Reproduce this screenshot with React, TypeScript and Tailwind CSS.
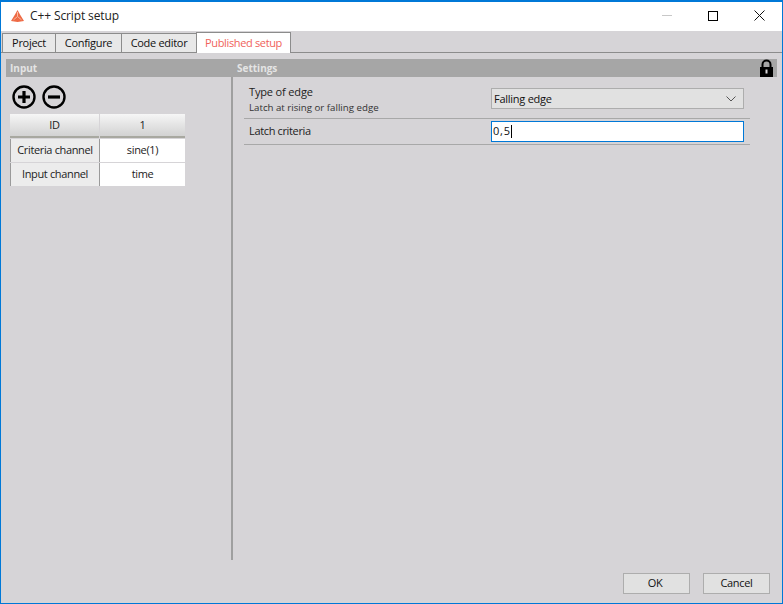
import React from "react";

const font = { fontFamily: '"Open Sans", "Noto Sans", sans-serif' };

function Tab({ label, w }: { label: string; w: string }) {
  return (
    <div className={`${w} h-[19px] flex items-center justify-center bg-[#e8e8e8] border border-[#8c8c8c] border-b-0 border-r-0 text-[11px] tracking-[-0.3px] text-[#111]`}>
      {label}
    </div>
  );
}

function Cell({ children, head, white, w }: { children: React.ReactNode; head?: boolean; white?: boolean; w: string }) {
  const bg = head
    ? "bg-gradient-to-b from-[#f6f6f6] to-[#d2d2d2] border-b-2 border-b-[#a8a8a0] h-[24px]"
    : white
    ? "bg-white h-[23px]"
    : "bg-[#ececec] border-l border-l-[#9a9a9a] border-r border-r-[#9a9a9a] h-[23px]";
  return <div className={`${w} ${bg} flex items-center justify-center text-[11px] tracking-[-0.35px] text-[#222]`}>{children}</div>;
}

export default function App() {
  return (
    <div style={font} className="w-[783px] h-[604px] border border-[#0078d7] border-t-2 bg-[#d6d4d7] flex flex-col overflow-hidden">
      <div className="h-[29px] shrink-0 bg-white flex items-center pl-[10px] pb-[2px]">
        <svg width="13" height="12" viewBox="0 0 13 12" className="mr-[6px]">
          <path d="M6.5 0 L9 4.5 L13 11 L6.5 12 L0 11 L4 4.5 Z" fill="#ee6a45" />
          <path d="M6.5 6.5 L6.5 2 M6.5 6.5 L2.5 9.8 M6.5 6.5 L10.5 9.8" stroke="#f9b8a0" strokeWidth="1" fill="none" />
        </svg>
        <span className="text-[12px] tracking-[-0.12px] text-[#222]">C++ Script setup</span>
        <div className="ml-auto flex items-center">
          <div className="w-[46px] flex justify-center"><div className="w-[10px] h-px bg-[#c8c8c8]" /></div>
          <div className="w-[46px] flex justify-center"><div className="w-[10px] h-[10px] border border-black" /></div>
          <div className="w-[46px] flex justify-center">
            <svg width="11" height="11" viewBox="0 0 11 11"><path d="M0.5 0.5 L10.5 10.5 M10.5 0.5 L0.5 10.5" stroke="#111" strokeWidth="1" /></svg>
          </div>
        </div>
      </div>

      <div className="h-[22px] shrink-0 flex items-end pl-px border-b border-b-[#8c8c8c]">
        <Tab label="Project" w="w-[53px]" />
        <Tab label="Configure" w="w-[66px]" />
        <Tab label="Code editor" w="w-[75px]" />
        <div className="w-[95px] h-[21px] -mb-px flex items-center justify-center bg-white border border-[#8c8c8c] border-b-0 text-[11px] tracking-[-0.35px] text-[#f0625a]">
          Published setup
        </div>
      </div>

      <div className="flex-1 flex flex-col pt-[6px] pl-[5px] pr-[5px]">
        <div className="h-[18px] shrink-0 w-[771px] bg-[#a6a6a6] flex items-center text-[10px] font-bold text-[#e4e4e4] relative">
          <span className="w-[231px] pl-1">Input</span>
          <span>Settings</span>
          <svg width="15" height="18" viewBox="0 0 15 18" className="absolute right-[3px] top-0">
            <path d="M3.5 8 V5.5 a4 4 0 0 1 8 0 V8" fill="none" stroke="#000" strokeWidth="2" />
            <rect x="1" y="8" width="13" height="10" fill="#000" />
            <rect x="6.5" y="10.5" width="2" height="4" fill="#d6d4d7" />
          </svg>
        </div>

        <div className="h-[483px] flex">
          <div className="w-[221px] pl-[4px] pt-[8px] border-r-2 border-r-[#9f9f9f] box-content">
            <div className="flex gap-[6px] pl-[2px] h-[24px]">
              <svg width="24" height="24" viewBox="0 0 24 24">
                <circle cx="12" cy="12" r="10.5" fill="none" stroke="#000" strokeWidth="2.4" />
                <path d="M12 6 V18 M6 12 H18" stroke="#000" strokeWidth="3.2" />
              </svg>
              <svg width="24" height="24" viewBox="0 0 24 24">
                <circle cx="12" cy="12" r="10.5" fill="none" stroke="#000" strokeWidth="2.4" />
                <path d="M6 12 H18" stroke="#000" strokeWidth="3.2" />
              </svg>
            </div>
            <div className="mt-[5px] w-[175px] flex flex-col">
              <div className="flex gap-px">
                <Cell head w="w-[89px]">ID</Cell>
                <Cell head w="w-[85px]">1</Cell>
              </div>
              <div className="flex mt-px">
                <Cell w="w-[90px]">Criteria channel</Cell>
                <Cell white w="w-[85px]">sine(1)</Cell>
              </div>
              <div className="flex mt-px">
                <Cell w="w-[90px]">Input channel</Cell>
                <Cell white w="w-[85px]">time</Cell>
              </div>
            </div>
          </div>

          <div className="w-[506px] ml-[11px]">
            <div className="h-[42px] flex items-start border-b border-b-[#a8a8a8]">
              <div className="w-[247px] pl-[5px] pt-[8px]">
                <div className="text-[11px] leading-[14px] tracking-[-0.15px] text-[#222]">Type of edge</div>
                <div className="text-[9.7px] leading-[17px] text-[#333]">Latch at rising or falling edge</div>
              </div>
              <div className="w-[253px] h-[21px] mt-[11px] bg-[#e1e1e1] border border-[#adadad] flex items-center pl-[2px] pr-[7px] text-[11px] tracking-[-0.25px] text-[#111]">
                <span className="pt-px">Falling edge</span>
                <svg width="10" height="6" viewBox="0 0 10 6" className="ml-auto"><path d="M0.5 0.5 L5 5 L9.5 0.5" fill="none" stroke="#555" /></svg>
              </div>
            </div>
            <div className="h-[26px] flex items-center border-b border-b-[#a8a8a8]">
              <div className="w-[247px] pl-[5px] text-[11px] tracking-[-0.35px] text-[#222]">Latch criteria</div>
              <div className="w-[253px] h-[21px] bg-white border border-[#0078d7] flex items-center pl-px text-[11px] tracking-[0.8px] text-[#111]">
                0,5<span className="w-px h-[13px] bg-black" />
              </div>
            </div>
          </div>
        </div>

        <div className="flex justify-end gap-[13px] mt-[13px] pr-[7px]">
          <div className="w-[67px] h-[21px] bg-[#e1e1e1] border border-[#adadad] flex items-center justify-center text-[11px] tracking-[-0.3px] text-[#111] pr-[3px]">OK</div>
          <div className="w-[67px] h-[21px] bg-[#e1e1e1] border border-[#adadad] flex items-center justify-center text-[11px] tracking-[-0.3px] text-[#111]">Cancel</div>
        </div>
      </div>
    </div>
  );
}
